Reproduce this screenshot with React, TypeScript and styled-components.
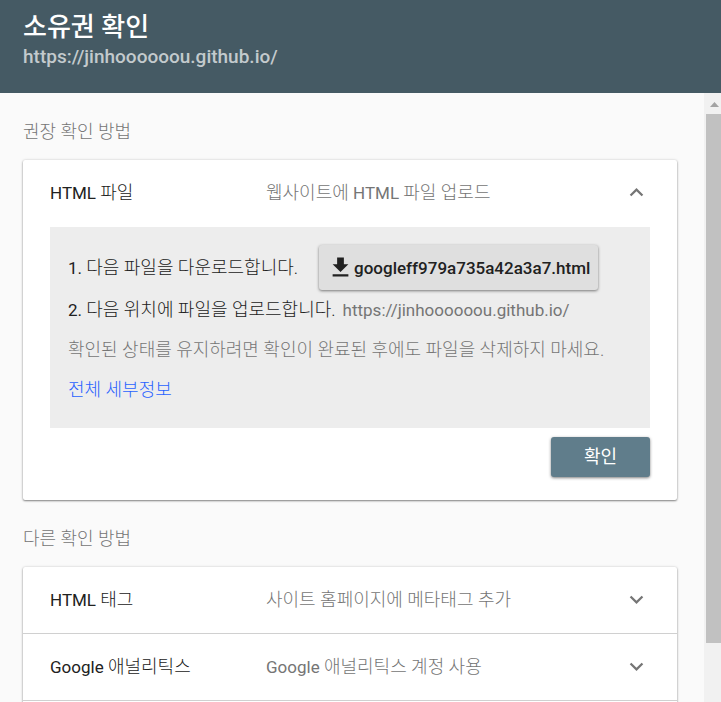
import React, { useState } from "react";
import styled, { createGlobalStyle } from "styled-components";

const GlobalStyle = createGlobalStyle`
  *, *::before, *::after { box-sizing: border-box; }
  body {
    margin: 0;
    background: #fafafa;
    color: #212121;
    font-family: Roboto, "Noto Sans CJK KR", sans-serif;
    font-size: 17px;
    font-weight: 400;
    line-height: 24px;
  }
  button { font: inherit; color: inherit; border: 0; cursor: pointer; }
`;

const Page = styled.div`
  display: flex;
  flex-direction: column;
  height: 100vh;
  overflow: hidden;
`;

const Header = styled.header`
  flex: none;
  padding: 10px 23px 24px;
  background: #455a64;
`;

const Title = styled.h1`
  margin: 0;
  color: #fff;
  font-size: 26px;
  font-weight: 500;
  line-height: 35px;
`;

const SiteUrl = styled.div`
  color: #c3cacd;
  font-size: 19px;
  font-weight: 500;
  line-height: 24px;
`;

const Body = styled.div`
  display: flex;
  flex: 1;
  min-height: 0;
`;

const Content = styled.main`
  flex: 1;
  min-width: 0;
  padding: 0 27px 0 23px;
  overflow: hidden;
`;

const SectionTitle = styled.h2`
  margin: 0;
  padding: 27px 0 16px;
  color: #757575;
  font-size: 18px;
  font-weight: 300;
  line-height: 24px;
`;

const Card = styled.section`
  background: #fff;
  border-radius: 2px;
  box-shadow: 0 1px 2px rgba(0, 0, 0, 0.45), 0 0 3px rgba(0, 0, 0, 0.14);
`;

const MethodList = styled(Card)`
  padding-bottom: 67px;
`;

const Korean = styled.span`
  font-size: 18px;
  font-weight: 300;
`;

const MethodHeader = styled.button<{ $divided?: boolean }>`
  display: grid;
  grid-template-columns: 216px 1fr 27px;
  align-items: center;
  width: 100%;
  height: 67px;
  padding: 0 27px;
  background: transparent;
  text-align: left;
  border-bottom: 1px solid ${(p) => (p.$divided ? "#d0d0d0" : "transparent")};
`;

const MethodName = styled.span`
  font-weight: 400;
`;

const MethodSummary = styled.span`
  color: #757575;
`;

const Details = styled.div`
  margin: 0 27px;
  padding: 18px;
  background: #ededed;
`;

const Steps = styled.ol`
  margin: 0;
  padding: 0;
  list-style: none;
`;

const Step = styled.li`
  display: flex;
  align-items: center;
  min-height: 40px;
`;

const StepUrl = styled.span`
  margin-left: 7px;
  color: #757575;
`;

const Note = styled.p`
  margin: 0;
  color: #757575;
  font-size: 18px;
  font-weight: 300;
  line-height: 40px;
`;

const DetailsLink = styled.a`
  display: block;
  width: fit-content;
  color: #2962ff;
  font-size: 18px;
  font-weight: 300;
  line-height: 40px;
  text-decoration: none;
`;

const RaisedButton = styled.button`
  display: inline-flex;
  align-items: center;
  justify-content: center;
  border-radius: 3px;
  box-shadow: 0 1px 3px rgba(0, 0, 0, 0.5);
  font-weight: 500;
`;

const DownloadButton = styled(RaisedButton)`
  height: 45px;
  margin-left: 21px;
  padding: 0 8px;
  background: #dfdfdf;
`;

const Actions = styled.div`
  display: flex;
  justify-content: flex-end;
  padding: 9px 27px 23px;
`;

const VerifyButton = styled(RaisedButton)`
  width: 99px;
  height: 40px;
  background: #607d8b;
  color: #fff;
  font-size: 18px;
  font-weight: 400;
`;

const Icon = styled.svg`
  flex: none;
  width: 27px;
  height: 27px;
  fill: currentColor;
`;

const ChevronIcon = styled(Icon)`
  margin-bottom: 2px;
  color: #757575;
`;

const Scrollbar = styled.div`
  flex: none;
  display: flex;
  flex-direction: column;
  width: 17px;
  padding-left: 2px;
  background: #f1f1f1;
`;

const ScrollUp = styled.div`
  display: flex;
  align-items: center;
  justify-content: center;
  height: 21px;
  padding: 2px 0 0 2px;
`;

const ScrollArrow = styled.svg`
  width: 9px;
  height: 5px;
  fill: #a3a3a3;
`;

const ScrollThumb = styled.div`
  flex: 9;
  background: #c1c1c1;
`;

const ScrollRest = styled.div`
  flex: 1;
`;

const Chevron = ({ up }: { up?: boolean }) => (
  <ChevronIcon viewBox="0 0 24 24" aria-hidden="true">
    <path
      d={
        up
          ? "M12 8l-6 6 1.41 1.41L12 10.83l4.59 4.58L18 14z"
          : "M16.59 8.59L12 13.17 7.41 8.59 6 10l6 6 6-6z"
      }
    />
  </ChevronIcon>
);

const SITE = "https://jinhoooooou.github.io/";

export default function App() {
  const [open, setOpen] = useState(true);
  return (
    <>
      <GlobalStyle />
      <Page lang="ko">
        <Header>
          <Title>소유권 확인</Title>
          <SiteUrl>{SITE}</SiteUrl>
        </Header>
        <Body>
          <Content>
            <SectionTitle>권장 확인 방법</SectionTitle>
            <Card>
              <MethodHeader aria-expanded={open} onClick={() => setOpen(!open)}>
                <MethodName>
                  HTML <Korean>파일</Korean>
                </MethodName>
                <MethodSummary>
                  <Korean>웹사이트에</Korean> HTML <Korean>파일 업로드</Korean>
                </MethodSummary>
                <Chevron up={open} />
              </MethodHeader>
              {open && (
                <>
                  <Details>
                    <Steps>
                      <Step>
                        <span>
                          1. <Korean>다음 파일을 다운로드합니다.</Korean>
                        </span>
                        <DownloadButton>
                          <Icon viewBox="0 0 24 24" aria-hidden="true">
                            <path d="M19 9h-4V3H9v6H5l7 7 7-7zM5 18v2h14v-2H5z" />
                          </Icon>
                          googleff979a735a42a3a7.html
                        </DownloadButton>
                      </Step>
                      <Step>
                        <span>
                          2. <Korean>다음 위치에 파일을 업로드합니다.</Korean>
                        </span>
                        <StepUrl>{SITE}</StepUrl>
                      </Step>
                    </Steps>
                    <Note>확인된 상태를 유지하려면 확인이 완료된 후에도 파일을 삭제하지 마세요.</Note>
                    <DetailsLink href="#details">전체 세부정보</DetailsLink>
                  </Details>
                  <Actions>
                    <VerifyButton>확인</VerifyButton>
                  </Actions>
                </>
              )}
            </Card>
            <SectionTitle>다른 확인 방법</SectionTitle>
            <MethodList>
              <MethodHeader $divided aria-expanded={false}>
                <MethodName>
                  HTML <Korean>태그</Korean>
                </MethodName>
                <MethodSummary>
                  <Korean>사이트 홈페이지에 메타태그 추가</Korean>
                </MethodSummary>
                <Chevron />
              </MethodHeader>
              <MethodHeader $divided aria-expanded={false}>
                <MethodName>
                  Google <Korean>애널리틱스</Korean>
                </MethodName>
                <MethodSummary>
                  Google <Korean>애널리틱스 계정 사용</Korean>
                </MethodSummary>
                <Chevron />
              </MethodHeader>
            </MethodList>
          </Content>
          <Scrollbar aria-hidden="true">
            <ScrollUp>
              <ScrollArrow viewBox="0 0 9 5">
                <path d="M0 5L4.5 0 9 5z" />
              </ScrollArrow>
            </ScrollUp>
            <ScrollThumb />
            <ScrollRest />
          </Scrollbar>
        </Body>
      </Page>
    </>
  );
}
